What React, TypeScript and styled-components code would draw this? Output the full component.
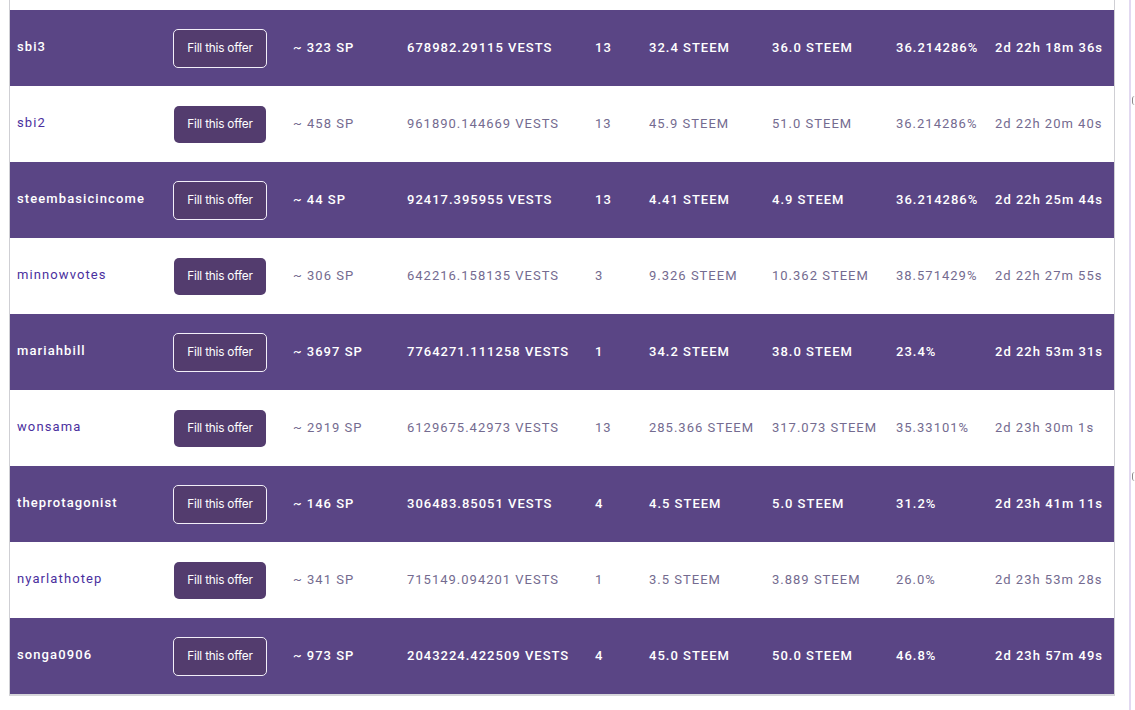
import styled, { createGlobalStyle } from 'styled-components'

const GlobalStyle = createGlobalStyle`
  html, body {
    margin: 0;
    padding: 0;
    background: #ffffff;
  }
  body {
    font-family: Roboto, "Liberation Sans", sans-serif;
    overflow: hidden;
  }
`

type Offer = {
  name: string
  sp: string
  vests: string
  count: string
  pay: string
  get: string
  pct: string
  time: string
}

const offers: Offer[] = [
  { name: 'sbi3', sp: '~ 323 SP', vests: '678982.29115 VESTS', count: '13', pay: '32.4 STEEM', get: '36.0 STEEM', pct: '36.214286%', time: '2d 22h 18m 36s' },
  { name: 'sbi2', sp: '~ 458 SP', vests: '961890.144669 VESTS', count: '13', pay: '45.9 STEEM', get: '51.0 STEEM', pct: '36.214286%', time: '2d 22h 20m 40s' },
  { name: 'steembasicincome', sp: '~ 44 SP', vests: '92417.395955 VESTS', count: '13', pay: '4.41 STEEM', get: '4.9 STEEM', pct: '36.214286%', time: '2d 22h 25m 44s' },
  { name: 'minnowvotes', sp: '~ 306 SP', vests: '642216.158135 VESTS', count: '3', pay: '9.326 STEEM', get: '10.362 STEEM', pct: '38.571429%', time: '2d 22h 27m 55s' },
  { name: 'mariahbill', sp: '~ 3697 SP', vests: '7764271.111258 VESTS', count: '1', pay: '34.2 STEEM', get: '38.0 STEEM', pct: '23.4%', time: '2d 22h 53m 31s' },
  { name: 'wonsama', sp: '~ 2919 SP', vests: '6129675.42973 VESTS', count: '13', pay: '285.366 STEEM', get: '317.073 STEEM', pct: '35.33101%', time: '2d 23h 30m 1s' },
  { name: 'theprotagonist', sp: '~ 146 SP', vests: '306483.85051 VESTS', count: '4', pay: '4.5 STEEM', get: '5.0 STEEM', pct: '31.2%', time: '2d 23h 41m 11s' },
  { name: 'nyarlathotep', sp: '~ 341 SP', vests: '715149.094201 VESTS', count: '1', pay: '3.5 STEEM', get: '3.889 STEEM', pct: '26.0%', time: '2d 23h 53m 28s' },
  { name: 'songa0906', sp: '~ 973 SP', vests: '2043224.422509 VESTS', count: '4', pay: '45.0 STEEM', get: '50.0 STEEM', pct: '46.8%', time: '2d 23h 57m 49s' },
]

const Page = styled.div`
  display: flex;
  align-items: flex-start;
  padding-left: 9px;
  height: 710px;
`

const Table = styled.div`
  width: 1106px;
  border-left: 1px solid #cfcfd4;
  border-right: 1px solid #cfcfd4;
  border-bottom: 2px solid #d6d6da;
  display: flex;
  flex-direction: column;
`

const TopGap = styled.div`
  height: 10px;
  background: #ffffff;
`

const Row = styled.div<{ $dark: boolean }>`
  height: 76px;
  display: grid;
  grid-template-columns: 156px 120px 114px 188px 54px 123px 124px 99px 1fr;
  align-items: center;
  padding-left: 7px;
  background: ${(p) => (p.$dark ? '#5a4585' : '#ffffff')};
  color: ${(p) => (p.$dark ? '#ffffff' : '#746b90')};
  font-size: 13px;
  font-weight: ${(p) => (p.$dark ? 500 : 400)};
  letter-spacing: 1px;
  white-space: nowrap;
`

const Name = styled.div<{ $dark: boolean }>`
  color: ${(p) => (p.$dark ? '#ffffff' : '#4a2f9e')};
  letter-spacing: 1.1px;
  margin-top: -4px;
`

const Cell = styled.div`
  margin-top: -1px;
`

const FillButton = styled.button<{ $dark: boolean }>`
  width: ${(p) => (p.$dark ? '94px' : '92px')};
  height: ${(p) => (p.$dark ? '39px' : '37px')};
  margin-left: ${(p) => (p.$dark ? '0' : '1px')};
  margin-top: 1px;
  background: #533c6e;
  color: #ffffff;
  border: ${(p) => (p.$dark ? '1px solid #f2eef8' : 'none')};
  border-radius: 5px;
  font-family: Inter, "Open Sans", sans-serif;
  font-size: 11.8px;
  font-weight: 400;
  letter-spacing: -0.2px;
  padding: 0;
  cursor: pointer;
`

const Side = styled.div`
  margin-left: 14px;
  width: 4px;
  height: 710px;
  border-left: 2px solid #e2d9f1;
  position: relative;
`

const EdgeMark = styled.span<{ $top: number }>`
  position: absolute;
  left: 1px;
  top: ${(p) => p.$top}px;
  width: 2px;
  height: 9px;
  border-left: 1.5px solid #8a8a8a;
  border-radius: 4px 0 0 4px;
`

export default function App() {
  return (
    <>
      <GlobalStyle />
      <Page>
        <Table>
          <TopGap />
          {offers.map((o, i) => {
            const dark = i % 2 === 0
            return (
              <Row key={o.name} $dark={dark}>
                <Name $dark={dark}>{o.name}</Name>
                <Cell>
                  <FillButton $dark={dark}>Fill this offer</FillButton>
                </Cell>
                <Cell>{o.sp}</Cell>
                <Cell>{o.vests}</Cell>
                <Cell>{o.count}</Cell>
                <Cell>{o.pay}</Cell>
                <Cell>{o.get}</Cell>
                <Cell>{o.pct}</Cell>
                <Cell>{o.time}</Cell>
              </Row>
            )
          })}
        </Table>
        <Side>
          <EdgeMark $top={96} />
          <EdgeMark $top={472} />
        </Side>
      </Page>
    </>
  )
}
